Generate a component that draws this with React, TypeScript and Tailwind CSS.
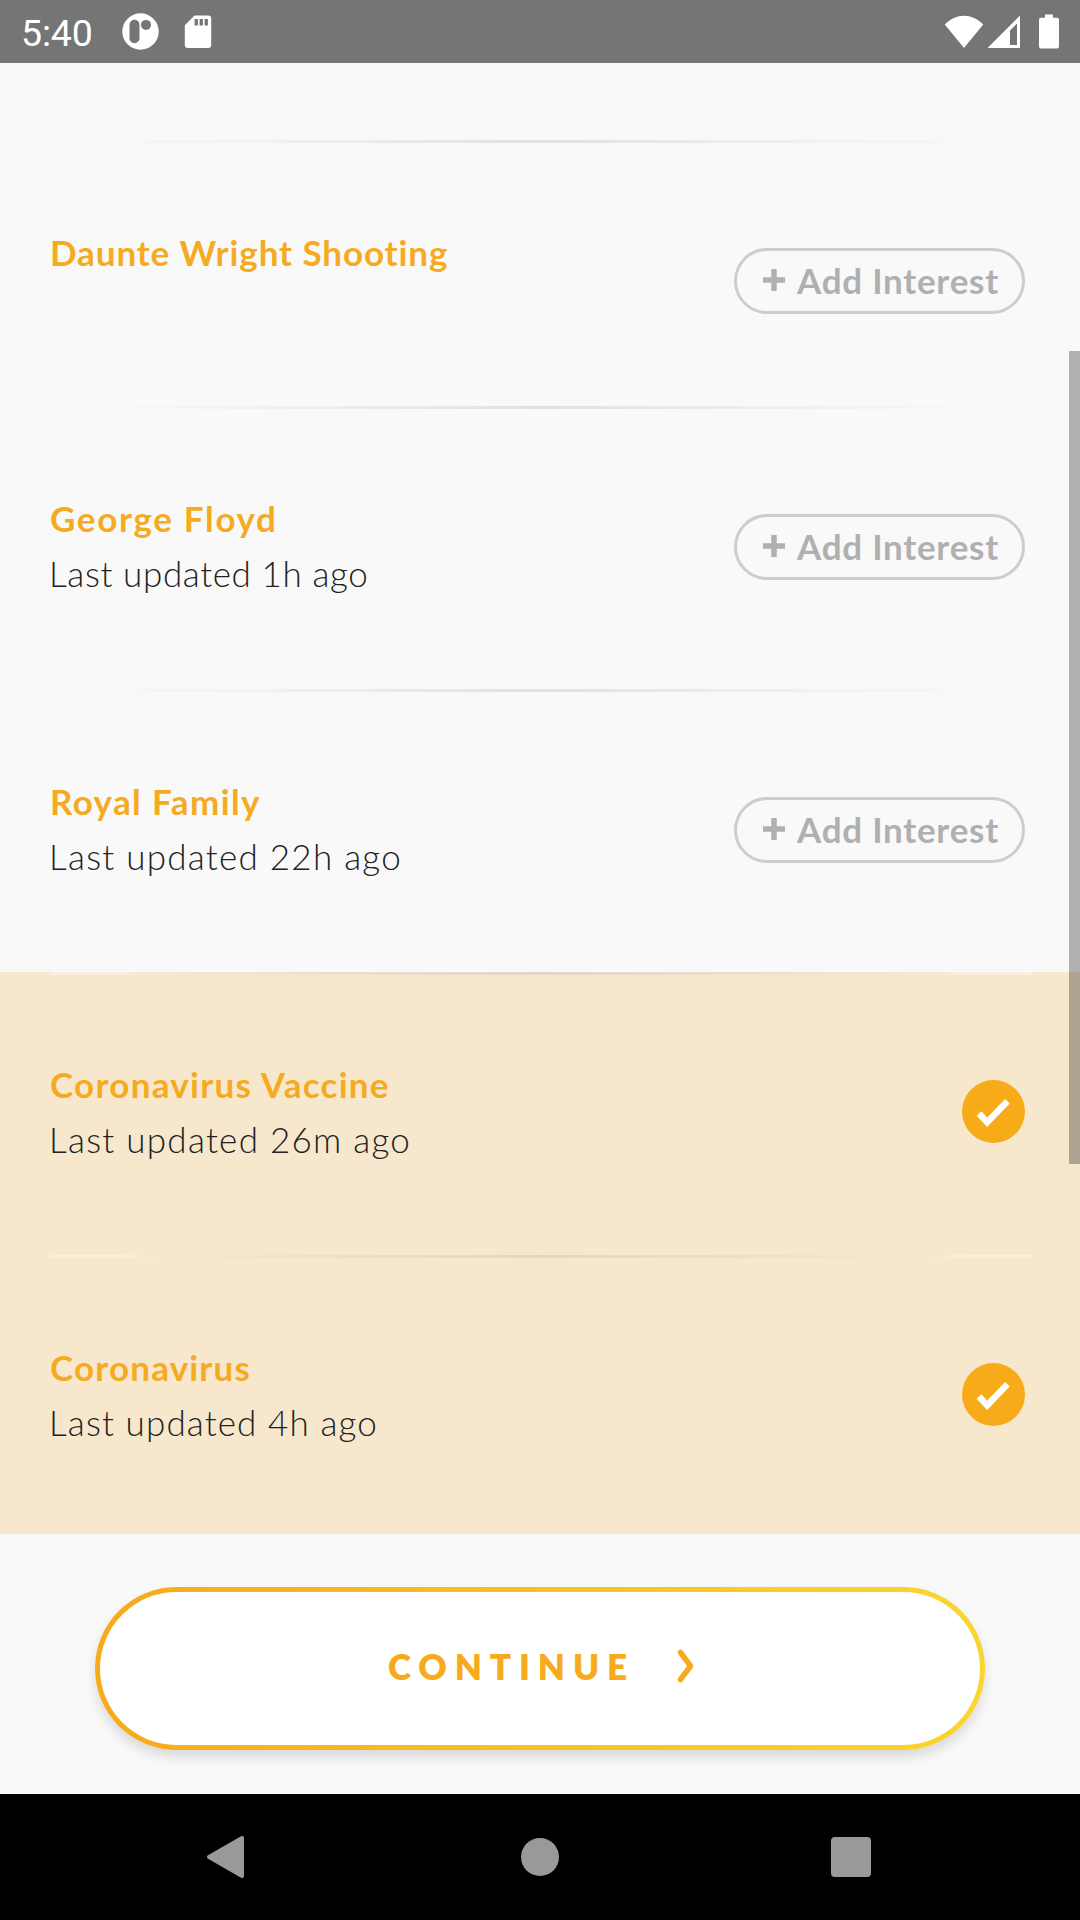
import React from "react";

type Interest = {
  title: string;
  titleTracking: string;
  updated?: string;
  updatedTracking?: string;
  selected?: boolean;
};

const interests: Interest[] = [
  { title: "Daunte Wright Shooting", titleTracking: "tracking-[0.91px]" },
  {
    title: "George Floyd",
    titleTracking: "tracking-[1.66px]",
    updated: "Last updated 1h ago",
    updatedTracking: "tracking-[0.62px]",
  },
  {
    title: "Royal Family",
    titleTracking: "tracking-[1.37px]",
    updated: "Last updated 22h ago",
    updatedTracking: "tracking-[1.25px]",
  },
  {
    title: "Coronavirus Vaccine",
    titleTracking: "tracking-[1.28px]",
    updated: "Last updated 26m ago",
    updatedTracking: "tracking-[1.26px]",
    selected: true,
  },
  {
    title: "Coronavirus",
    titleTracking: "tracking-[1.17px]",
    updated: "Last updated 4h ago",
    updatedTracking: "tracking-[1.12px]",
    selected: true,
  },
];

function StatusBar() {
  return (
    <header className="flex h-[63px] shrink-0 items-center justify-between bg-[#757575] text-white">
      <div className="flex h-full items-center pl-[21px]">
        <span className="w-[101px] pt-[4px] font-[Roboto,sans-serif] text-[37.5px] leading-none tracking-[-0.2px]">
          5:40
        </span>
        <svg className="h-[37px] w-[37px]" viewBox="0 0 37 37">
          <circle cx="18.5" cy="18.5" r="18.2" fill="#fff" />
          <rect x="7.500" y="6.800" width="10" height="23.4" rx="5" fill="#757575" />
          <circle cx="24" cy="11.9" r="5" fill="#757575" />
        </svg>
        <svg className="ml-[25px] h-[34px] w-[28px]" viewBox="0 0 28 34">
          <path
            fill="#fff"
            fillRule="evenodd"
            d="M10.5 0.5H24.2a3 3 0 0 1 3 3V30a3 3 0 0 1-3 3H3.8a3 3 0 0 1-3-3V10.2ZM10.6 4v6.6h3.3V4Zm5 0v6.6h3.3V4Zm5 0v6.6h3.3V4Z"
          />
        </svg>
      </div>
      <div className="flex items-center pr-[21px]">
        <svg className="h-[34px] w-[40px]" viewBox="0 0 40 34">
          <path d="M0.8 9.4C12 -2.2 28 -2.2 39.2 9.4L20 33Z" fill="#fff" />
        </svg>
        <svg className="ml-[3px] h-[34px] w-[34px]" viewBox="0 0 34 34">
          <path
            d="M33 0.5V33H0.5ZM30 8.6L23 15.6V30H30Z"
            fill="#fff"
            fillRule="evenodd"
          />
        </svg>
        <svg className="ml-[18px] h-[35px] w-[20px]" viewBox="0 0 20 35">
          <path
            d="M6 0.5h8v3.3h4a2 2 0 0 1 2 2V32.500a2 2 0 0 1-2 2H2a2 2 0 0 1-2-2V5.800a2 2 0 0 1 2-2H6Z"
            fill="#fff"
          />
        </svg>
      </div>
    </header>
  );
}

function AddInterestButton() {
  return (
    <button className="flex h-[66px] w-[291px] items-center rounded-full border-3 border-[#cdcdcd] pl-[26px] text-[#b0b0b0]">
      <svg className="mb-[2px] h-[22px] w-[22px]" viewBox="0 0 22 22">
        <path d="M0 11H22M11 0V22" stroke="currentColor" strokeWidth="5.500" />
      </svg>
      <span className="mb-[3px] ml-[12px] whitespace-nowrap text-[35px] leading-[40px] font-bold tracking-[0.75px]">
        Add Interest
      </span>
    </button>
  );
}

function CheckBadge() {
  return (
    <svg className="h-[63px] w-[63px]" viewBox="0 0 63 63">
      <circle cx="31.500" cy="31.500" r="31.500" fill="#f7ab19" />
      <path
        d="M17 33.500L25.200 42.200L45.400 21.300"
        fill="none"
        stroke="#fff"
        strokeWidth="6.5"
      />
    </svg>
  );
}

function InterestRow({ item }: { item: Interest }) {
  return (
    <li
      className={
        (item.selected ? "bg-[#f7e8cd] " : "") +
        (item.updated ? "h-[283px]" : "h-[266px]") +
        " flex shrink-0 flex-col"
      }
    >
      <div className="mr-[48px] ml-[50px] h-[3px] shrink-0 bg-[linear-gradient(90deg,rgba(255,245,240,0.5)_0%,rgba(255,245,240,0.4)_8%,rgba(245,235,235,0.25)_9%,rgba(220,210,210,0.2)_20%,rgba(190,183,188,0.38)_50%,rgba(220,210,210,0.2)_80%,rgba(245,235,235,0.25)_91%,rgba(255,245,240,0.4)_92%,rgba(255,245,240,0.5)_100%)]" />
      <div className="flex items-start justify-between pr-[55px] pl-[50px]">
        <div className="pt-[82px] text-[35px] leading-[55px] whitespace-nowrap">
          <h2 className={"font-bold text-[#f5ab21] " + item.titleTracking}>
            {item.title}
          </h2>
          {item.updated && (
            <p
              className={
                "-ml-[1px] font-light text-[#222] " + item.updatedTracking
              }
            >
              {item.updated}
            </p>
          )}
        </div>
        <div className="pt-[105px]">
          {item.selected ? <CheckBadge /> : <AddInterestButton />}
        </div>
      </div>
    </li>
  );
}

function NavigationBar() {
  return (
    <nav className="flex h-[126px] shrink-0 items-center justify-between bg-black pr-[209px] pl-[206px]">
      <svg className="h-[44px] w-[39px]" viewBox="0 0 39 44">
        <path
          d="M3 22L36 3V41Z"
          fill="#999"
          stroke="#999"
          strokeWidth="4"
          strokeLinejoin="round"
        />
      </svg>
      <span className="ml-[3px] h-[38px] w-[38px] rounded-full bg-[#999]" />
      <span className="h-[40px] w-[40px] rounded-[4px] bg-[#999]" />
    </nav>
  );
}

export default function App() {
  return (
    <div className="relative flex h-[1920px] w-[1080px] flex-col overflow-hidden bg-[#f9f9f9] font-[Lato,sans-serif]">
      <StatusBar />
      <ul className="flex h-[1471px] shrink-0 flex-col overflow-hidden pt-[77px]">
        {interests.map((item) => (
          <InterestRow key={item.title} item={item} />
        ))}
      </ul>
      <footer className="flex h-[260px] shrink-0 items-start justify-center bg-[#f9f9f9] pt-[53px]">
        <div className="h-[163px] w-[890px] rounded-full bg-linear-to-r from-[#f6aa1c] to-[#f9d62f] p-[5px] shadow-[0_7px_12px_rgba(0,0,0,0.13)]">
          <button className="flex h-full w-full items-center rounded-full bg-white pb-[5px] pl-[288px] text-[#f7ab1c]">
            <span className="text-[35px] leading-[40px] font-extrabold tracking-[7.91px]">
              CONTINUE
            </span>
            <svg className="ml-[42px] h-[34px] w-[18px]" viewBox="0 0 18 34">
              <path
                d="M3.500 3.500L13.500 17L3.500 30.500"
                fill="none"
                stroke="currentColor"
                strokeWidth="5.5"
                strokeLinecap="round"
                strokeLinejoin="round"
              />
            </svg>
          </button>
        </div>
      </footer>
      <NavigationBar />
      <div className="absolute top-[351px] right-0 h-[813px] w-[11px] bg-black/29" />
    </div>
  );
}
